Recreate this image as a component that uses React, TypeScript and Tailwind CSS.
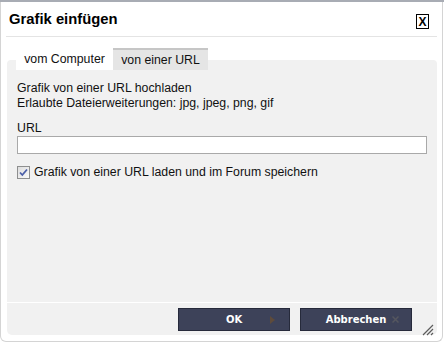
export default function App() {
  return (
    <div className="w-[444px] h-[345px] bg-white text-black overflow-hidden font-['Liberation_Sans',Arial,sans-serif]">
      <div className="h-[2px] bg-[#a8acb4]" />
      <div className="h-[340px] w-[443px] border-x border-b border-[#d4d4d4] rounded-b-[6px] flex flex-col">
        <div className="h-[34px] shrink-0 flex items-start justify-between pl-[8px] pr-[13px]">
          <div className="mt-[8px] text-[14.8px] leading-[18px] font-bold">Grafik einfügen</div>
          <div className="mt-[12px] w-[13px] h-[15px] border border-black flex items-center justify-center text-[12px] font-bold leading-none">
            X
          </div>
        </div>
        <div className="h-px shrink-0 bg-[#e4e4e4] ml-[5px] mr-[5px]" />
        <div className="flex-1 flex flex-col pl-[6px] pr-[5px] pt-[11px]">
          <div className="relative z-10 flex h-[22px] pl-[9px] text-[12.3px] text-[#111]">
            <div className="w-[97px] h-[22px] bg-white flex items-center justify-center pt-[1px]">vom Computer</div>
            <div className="w-[95px] h-[22px] bg-[#e5e5e5] border-t-2 border-[#c6c6c6] flex items-center justify-center">
              von einer URL
            </div>
          </div>
          <div className="flex-1 -mt-[10px] bg-[#f1f1f1] rounded-t-[4px] px-[10px] pt-[21px] text-[12.3px] leading-[15px] text-[#111]">
            <div>Grafik von einer URL hochladen</div>
            <div>Erlaubte Dateierweiterungen: jpg, jpeg, png, gif</div>
            <div className="mt-[10px]">URL</div>
            <div className="h-[18px] w-full bg-white border border-[#a9a9a9]" />
            <div className="mt-[11px] flex items-center gap-[4px]">
              <svg width="13" height="13" viewBox="0 0 13 13" className="shrink-0">
                <defs>
                  <linearGradient id="cbg" x1="0" y1="0" x2="1" y2="1">
                    <stop offset="0" stopColor="#dcdcdc" />
                    <stop offset="1" stopColor="#fbfbfb" />
                  </linearGradient>
                </defs>
                <rect x="0.5" y="0.5" width="12" height="12" fill="url(#cbg)" stroke="#8e8f8f" />
                <path d="M3 6.5 L5.3 9 L10 3.5" fill="none" stroke="#4b5fa8" strokeWidth="1.8" />
              </svg>
              <span>Grafik von einer URL laden und im Forum speichern</span>
            </div>
          </div>
          <div className="h-[32px] shrink-0 mt-px bg-[#f1f1f1] rounded-b-[5px] relative flex justify-end items-start pt-[5px] pr-[25px] gap-[10px]">
            <button className="relative w-[112px] h-[23px] bg-[#3d4259] border border-[#262a3b] text-white text-[10px] font-bold flex items-center justify-center font-['DejaVu_Sans',Verdana,sans-serif]">
              OK
              <svg width="5" height="8" viewBox="0 0 5 8" className="absolute right-[14px] top-[7px]">
                <path d="M0 0 L5 4 L0 8 Z" fill="#5e4b3b" />
              </svg>
            </button>
            <button className="relative w-[112px] h-[23px] bg-[#3d4259] border border-[#262a3b] text-white text-[10px] font-bold flex items-center justify-center font-['DejaVu_Sans',Verdana,sans-serif]">
              Abbrechen
              <svg width="7" height="7" viewBox="0 0 7 7" className="absolute right-[12px] top-[7px]">
                <path d="M0.5 0.5 L6.5 6.5 M6.5 0.5 L0.5 6.5" stroke="#55565f" strokeWidth="1.5" />
              </svg>
            </button>
            <svg width="12" height="12" viewBox="0 0 12 12" className="absolute right-[3px] bottom-[-1px]">
              <path d="M1 11 L11 1 M5 11 L11 5 M9 11 L11 9" stroke="#5c5c5c" strokeWidth="1.2" />
            </svg>
          </div>
          <div className="h-[6px] shrink-0" />
        </div>
      </div>
    </div>
  );
}
